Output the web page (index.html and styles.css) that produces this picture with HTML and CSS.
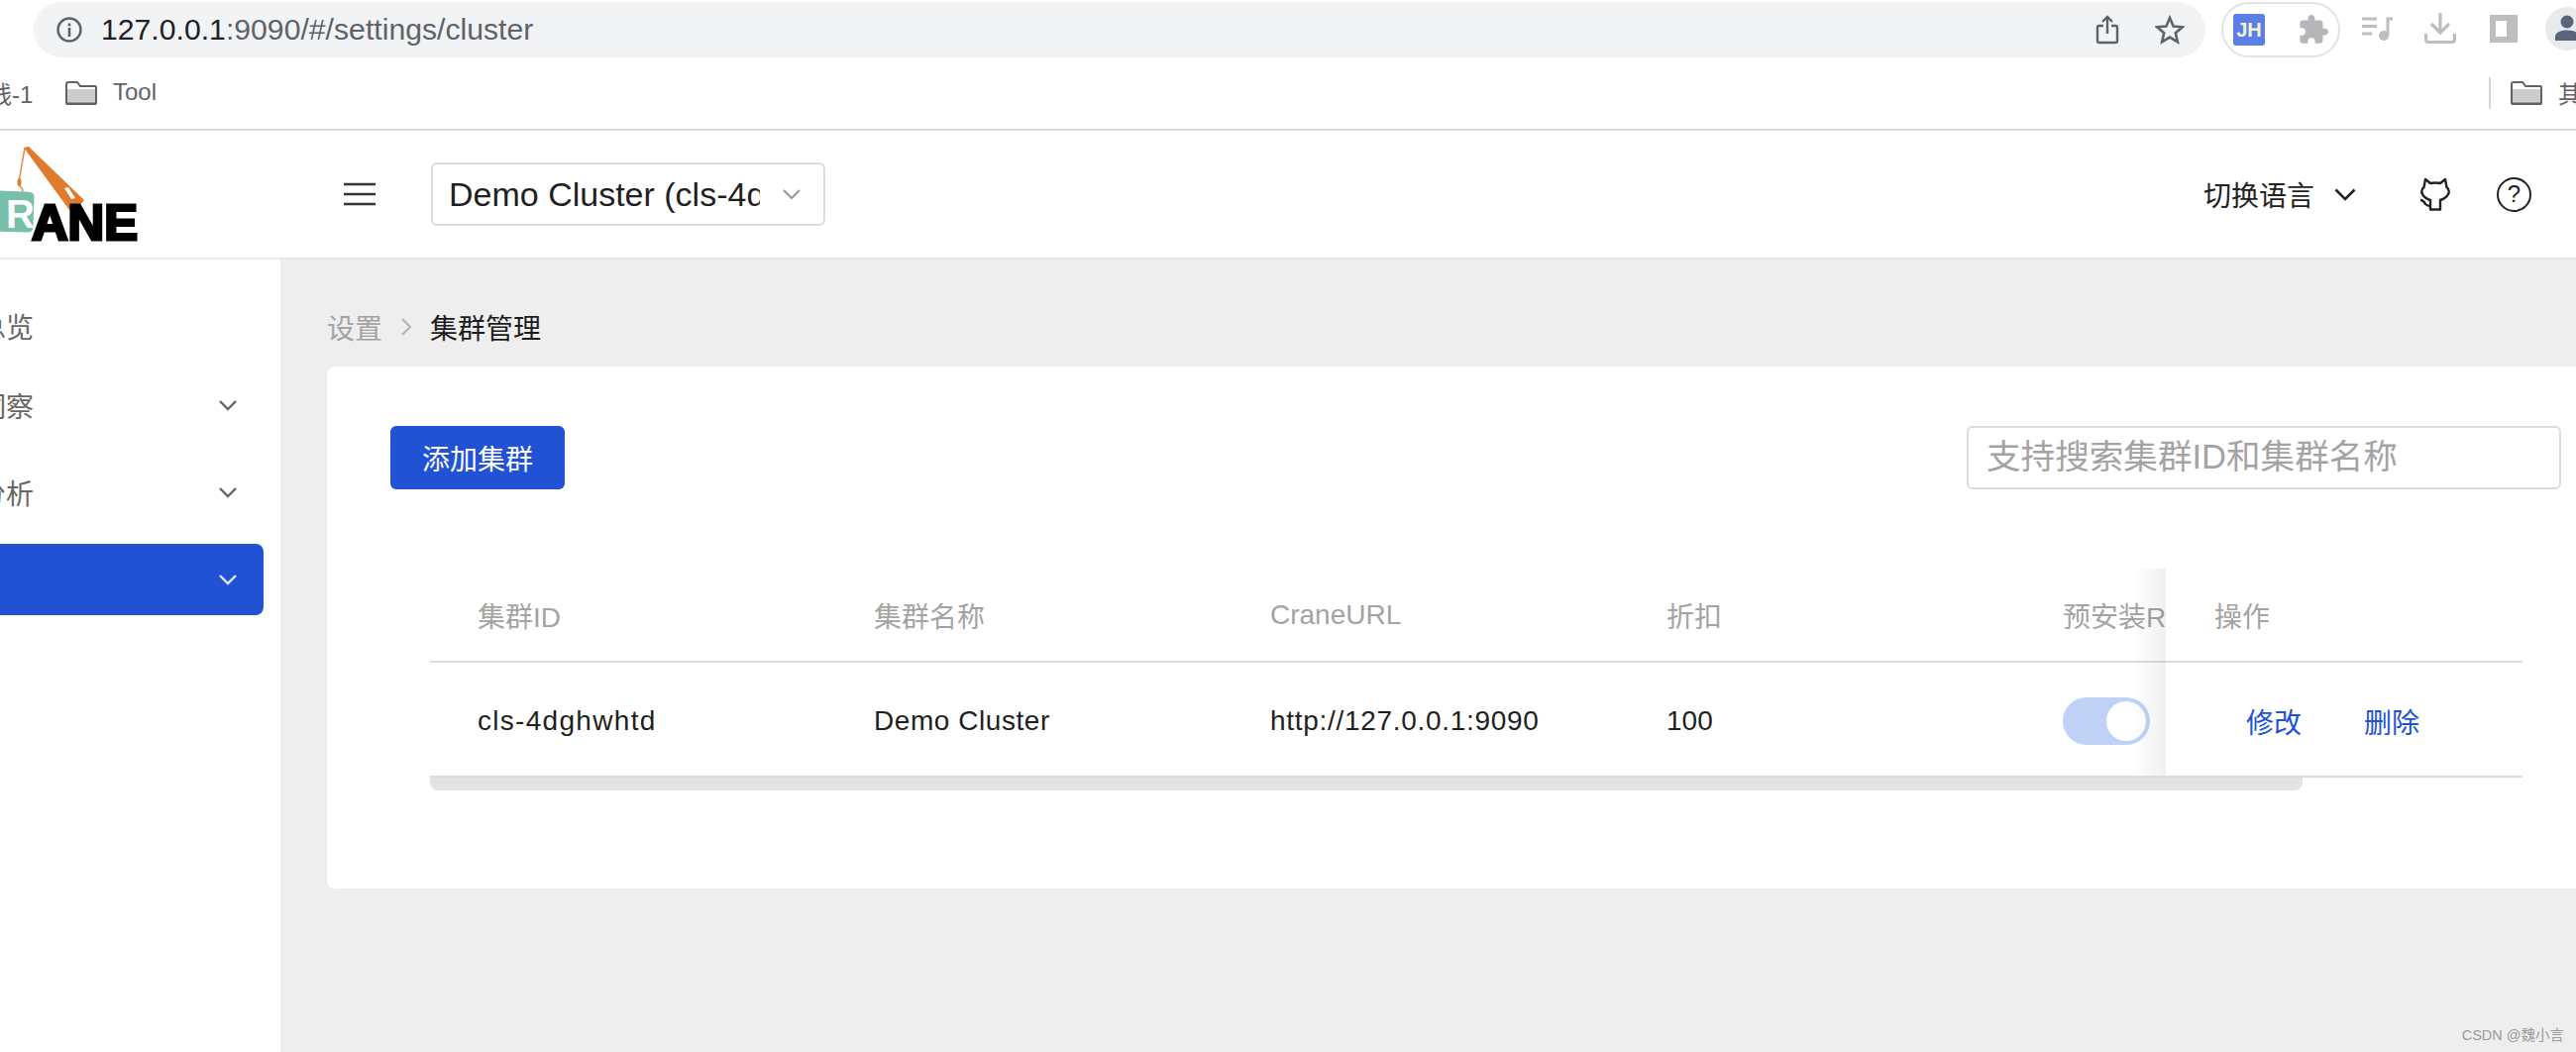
FILE: index.html
```html
<!DOCTYPE html>
<html lang="zh-CN">
<head>
<meta charset="UTF-8">
<title>集群管理</title>
<link rel="stylesheet" href="styles.css">
</head>
<body>
    <div class="toolbar">
        <div class="omnibox">
            <svg class="ico-info" viewBox="0 0 28 28"><circle cx="14" cy="14" r="11.5" fill="none" stroke="#5f6368" stroke-width="2.4"/><rect x="12.7" y="12" width="2.6" height="9" fill="#5f6368"/><rect x="12.7" y="7.5" width="2.6" height="2.8" fill="#5f6368"/></svg>
            <span class="url"><span class="url-host">127.0.0.1</span>:9090/#/settings/cluster</span>
            <svg class="ico-share" viewBox="0 0 24 30"><path d="M8 11H3.500a1.500 1.500 0 0 0-1.500 1.500V26.500A1.500 1.500 0 0 0 3.500 28h17a1.500 1.500 0 0 0 1.500-1.500V12.500A1.500 1.500 0 0 0 20.500 11H16M12 19V2M7 7l5-5 5 5" fill="none" stroke="#5f6368" stroke-width="2.4"/></svg>
            <svg class="ico-star" viewBox="0 0 30 30"><path d="M15 3l3.600 8.500 9.200.8-7 6 2.100 9L15 22.600 7.100 27.300l2.100-9-7-6 9.200-.8z" fill="none" stroke="#5f6368" stroke-width="2.600"/></svg>
        </div>
        <div class="ext-pill">
            <span class="ext-jh">JH</span>
            <svg class="ico-puzzle" viewBox="1 1 22 22"><path d="M20.500 11H19V7c0-1.100-.9-2-2-2h-4V3.500C13 2.120 11.880 1 10.500 1S8 2.120 8 3.500V5H4c-1.100 0-1.990.9-1.990 2v3.800H3.500c1.490 0 2.700 1.210 2.700 2.700s-1.210 2.700-2.700 2.700H2V20c0 1.100.9 2 2 2h3.800v-1.500c0-1.490 1.210-2.700 2.700-2.700 1.490 0 2.700 1.210 2.700 2.700V22H17c1.100 0 2-.9 2-2v-4h1.500c1.380 0 2.500-1.120 2.500-2.500S21.880 11 20.500 11z" fill="#b4b6b9"/></svg>
        </div>
        <svg class="ico-queue" viewBox="0 0 32 26"><path d="M1 3h15M1 10.500h15M1 18h10" stroke="#bdbec0" stroke-width="3" fill="none"/><path d="M27 20V3h5" stroke="#bdbec0" stroke-width="3" fill="none"/><circle cx="23" cy="20" r="5" fill="#bdbec0"/></svg>
        <svg class="ico-download" viewBox="0 0 32 32"><path d="M16 0v19M7 11l9 9 9-9M1.600 21v6a2.500 2.500 0 0 0 2.500 2.500h23.800a2.500 2.500 0 0 0 2.500-2.500v-6" fill="none" stroke="#bdbec0" stroke-width="3.200"/></svg>
        <div class="ico-panel"></div>
        <div class="avatar">
            <svg viewBox="0 0 44 44"><circle cx="22" cy="15" r="6.500" fill="#5a6478"/><path d="M10 34v-4c0-4 5-6.500 12-6.500S34 26 34 30v4z" fill="#5a6478"/></svg>
        </div>
    </div>

    <div class="bookmarks">
        <span class="bm-cut">钱-1</span>
        <svg class="ico-folder" viewBox="0 0 32 24"><path d="M1 22V3a2 2 0 0 1 2-2h9l3 4h15a1 1 0 0 1 1 1v16a1 1 0 0 1-1 1H2a1 1 0 0 1-1-1z" fill="#fff" stroke="#5f6368" stroke-width="2"/><rect x="2" y="8" width="28" height="14" fill="#ccc"/><path d="M1 22.500h30" stroke="#5f6368" stroke-width="2"/></svg>
        <span class="bm-text">Tool</span>
        <span class="bm-spacer"></span>
        <span class="bm-sep"></span>
        <svg class="ico-folder" viewBox="0 0 32 24"><path d="M1 22V3a2 2 0 0 1 2-2h9l3 4h15a1 1 0 0 1 1 1v16a1 1 0 0 1-1 1H2a1 1 0 0 1-1-1z" fill="#fff" stroke="#5f6368" stroke-width="2"/><rect x="2" y="8" width="28" height="14" fill="#ccc"/><path d="M1 22.500h30" stroke="#5f6368" stroke-width="2"/></svg>
        <span class="bm-text bm-other">其他书签</span>
    </div>

    <div class="header">
        <div class="logo">
            <svg viewBox="0 0 150 128" width="150" height="128">
                <path d="M24 17 L29 16 L85 70 L73 84 Q48 50 24 17z" fill="#e07b2d"/>
                <path d="M65 58 L69 57 L76 68 L72 69z" fill="#fff"/>
                <path d="M25 17 L20 46 L19 54 L23 60 L21 64" fill="none" stroke="#e58a45" stroke-width="1.500"/>
                <ellipse cx="19.500" cy="52" rx="2" ry="4" fill="#e07b2d"/>
                <rect x="-12" y="61" width="46" height="41" rx="5" fill="#76bfa9" transform="rotate(2 11 81)"/>
                <text x="6" y="98" class="logo-r">R</text>
                <text x="32" y="109.500" class="logo-ane" textLength="107" lengthAdjust="spacingAndGlyphs">ANE</text>
            </svg>
        </div>
        <svg class="ico-menu" viewBox="0 0 32 24"><path d="M0 2h32M0 12h32M0 22h32" stroke="#333" stroke-width="2.400"/></svg>
        <div class="cluster-select">
            <span class="cluster-name">Demo Cluster (cls-4dghwhtd)</span>
            <svg class="chev" viewBox="0 0 20 12"><path d="M2 2l8 8 8-8" fill="none" stroke="#999" stroke-width="2"/></svg>
        </div>
        <span class="lang">切换语言</span>
        <svg class="lang-chev" viewBox="0 0 22 13"><path d="M1.500 1.500l9.500 9.500 9.500-9.500" fill="none" stroke="#222" stroke-width="2.600"/></svg>
        <svg class="ico-github" viewBox="0 0 30 34"><path d="M5 2L10 6Q15 5 20 6L25 2L26.500 10Q29.500 12.500 28.500 16Q26.500 21 20 23V32.500H10V23Q3.500 21 1.500 16Q.5 12.500 3.500 10ZM0 23Q3 23 5 27Q7 29 10 29" fill="none" stroke="#222" stroke-width="2.400" stroke-linejoin="round"/></svg>
        <div class="ico-help">?</div>
    </div>

    <div class="main">
        <div class="sidebar">
            <div class="nav-item nav-first"><span class="nav-label">总览</span></div>
            <div class="nav-item"><span class="nav-label">洞察</span><svg class="nav-chev" viewBox="0 0 20 12"><path d="M2 2l8 8 8-8" fill="none" stroke="#666" stroke-width="2.400"/></svg></div>
            <div class="nav-item"><span class="nav-label">分析</span><svg class="nav-chev" viewBox="0 0 20 12"><path d="M2 2l8 8 8-8" fill="none" stroke="#666" stroke-width="2.400"/></svg></div>
            <div class="nav-item nav-active"><svg class="nav-chev" viewBox="0 0 20 12"><path d="M2 2l8 8 8-8" fill="none" stroke="#e4eaf9" stroke-width="2.400"/></svg></div>
        </div>
        <div class="content">
            <div class="breadcrumb">
                <span class="crumb-parent">设置</span>
                <svg class="crumb-sep" viewBox="0 0 12 20"><path d="M2 2l8 8-8 8" fill="none" stroke="#b5b5b5" stroke-width="2.200"/></svg>
                <span class="crumb-current">集群管理</span>
            </div>
            <div class="card">
                <div class="card-top">
                    <button class="btn-add">添加集群</button>
                    <div class="search">支持搜索集群ID和集群名称</div>
                </div>
                <div class="table-wrap">
                    <div class="row row-head">
                        <div class="cell">集群ID</div>
                        <div class="cell">集群名称</div>
                        <div class="cell">CraneURL</div>
                        <div class="cell">折扣</div>
                        <div class="cell cell-last">预安装R</div>
                    </div>
                    <div class="row row-body">
                        <div class="cell cell-id">cls-4dghwhtd</div>
                        <div class="cell cell-name">Demo Cluster</div>
                        <div class="cell cell-url">http://127.0.0.1:9090</div>
                        <div class="cell">100</div>
                        <div class="cell cell-last"><span class="switch"><span class="knob"></span></span></div>
                    </div>
                    <div class="scrollbar"></div>
                    <div class="fixed-col">
                        <div class="fixed-head">操作</div>
                        <div class="fixed-body"><a class="link">修改</a><a class="link">删除</a></div>
                    </div>
                </div>
            </div>
        </div>
    </div>
    <div class="watermark">CSDN @魏小言</div>
</body>
</html>
```

FILE: styles.css
```css
* {
    box-sizing: border-box;
}

html, body {
    margin: 0;
    padding: 0;
    height: 1062px;
    overflow: hidden;
}

body {
    position: relative;
    width: 2600px;
    background: #fff;
    font-family: "Liberation Sans", "Noto Sans CJK SC", sans-serif;
    color: #222;
}

/* browser bar */
.toolbar {
    height: 58px;
    display: flex;
    align-items: center;
    padding-left: 34px;
}

.toolbar > * {
    flex: none;
}

.omnibox {
    width: 2192px;
    height: 56px;
    margin-top: 2px;
    background: #f1f3f4;
    border-radius: 28px;
    display: flex;
    align-items: center;
    padding-left: 22px;
}

.ico-info {
    width: 28px;
    height: 28px;
}

.url {
    margin-left: 18px;
    font-size: 30.200px;
    color: #5f6368;
    flex: 1;
}

.url-host {
    color: #202124;
}

.ico-share {
    width: 24px;
    height: 30px;
}

.ico-star {
    width: 30px;
    height: 30px;
    margin-left: 36px;
    margin-right: 21px;
}

.ext-pill {
    width: 120px;
    height: 56px;
    margin-left: 16px;
    margin-top: 2px;
    border: 2px solid #e2e3e4;
    border-radius: 28px;
    display: flex;
    align-items: center;
    padding-left: 10px;
}

.ext-jh {
    width: 32px;
    height: 32px;
    background: #5b7fe6;
    border-radius: 3px;
    color: #f4f2d0;
    font-size: 20px;
    font-weight: bold;
    text-align: center;
    line-height: 32px;
}

.ico-puzzle {
    width: 30px;
    height: 30px;
    margin-left: 34px;
}

.ico-queue {
    width: 32px;
    height: 26px;
    margin-left: 21px;
}

.ico-download {
    width: 32px;
    height: 32px;
    margin-left: 32px;
}

.ico-panel {
    width: 28px;
    height: 28px;
    margin-left: 34px;
    border: 6px solid #bdbec0;
    border-right-width: 11px;
    background: #fff;
}

.avatar {
    width: 44px;
    height: 44px;
    margin-left: 28px;
    border-radius: 50%;
    background: #e8eaed;
}

.avatar svg {
    display: block;
}

/* bookmarks */
.bookmarks {
    height: 74px;
    border-bottom: 2px solid #dcdcdc;
    display: flex;
    align-items: center;
    font-size: 24px;
    color: #5f6368;
}

.bm-cut {
    width: 32px;
    flex: none;
    margin-left: -12px;
    padding-bottom: 2px;
    white-space: nowrap;
}

.ico-folder {
    width: 32px;
    height: 24px;
    flex: none;
    margin-left: 46px;
}

.bm-text {
    margin-left: 16px;
    padding-bottom: 2px;
    white-space: nowrap;
}

.bm-spacer {
    flex: 1;
}

.bm-sep {
    width: 2px;
    height: 32px;
    background: #d5d5d5;
}

.bm-sep + .ico-folder {
    margin-left: 20px;
}

.bm-other {
    width: 18px;
    overflow: hidden;
    flex: none;
}

/* app header */
.header {
    height: 130px;
    border-bottom: 2px solid #e8e8e8;
    display: flex;
    align-items: center;
}

.logo {
    width: 347px;
    flex: none;
    height: 128px;
}

.logo svg {
    display: block;
}

.logo-r {
    font-family: "Liberation Sans", sans-serif;
    font-size: 40px;
    font-weight: bold;
    fill: #fff;
}

.logo-ane {
    font-family: "Liberation Sans", sans-serif;
    font-size: 50px;
    font-weight: bold;
    fill: #000;
    stroke: #000;
    stroke-width: 3px;
}

.ico-menu {
    width: 32px;
    height: 24px;
    flex: none;
}

.cluster-select {
    width: 398px;
    height: 64px;
    margin-left: 56px;
    border: 2px solid #dcdcdc;
    border-radius: 6px;
    display: flex;
    align-items: center;
    padding-left: 16px;
}

.cluster-name {
    width: 314px;
    overflow: hidden;
    white-space: nowrap;
    font-size: 34px;
    color: #1f1f1f;
    flex: none;
}

.chev {
    width: 20px;
    height: 12px;
    margin-left: 22px;
}

.lang {
    margin-left: auto;
    font-size: 28px;
    color: #222;
}

.lang-chev {
    width: 22px;
    height: 13px;
    margin-left: 20px;
}

.ico-github {
    width: 30px;
    height: 34px;
    margin-left: 65px;
}

.ico-help {
    width: 35px;
    height: 35px;
    margin-left: 47px;
    margin-right: 45px;
    border: 2.4px solid #222;
    border-radius: 50%;
    font-size: 24px;
    text-align: center;
    line-height: 30px;
}

/* main */
.main {
    display: flex;
    height: 800px;
}

.sidebar {
    width: 283px;
    flex: none;
    padding-right: 17px;
    padding-top: 36px;
    background: #fff;
}

.nav-item {
    height: 88px;
    display: flex;
    align-items: center;
    font-size: 28px;
    color: #666;
    position: relative;
}

.nav-first {
    height: 62px;
    margin-bottom: 5px;
}

.nav-label {
    margin-left: -22px;
    white-space: nowrap;
}

.nav-chev {
    width: 20px;
    height: 12px;
    position: absolute;
    left: 220px;
    top: 38px;
}

.nav-active {
    height: 72px;
    margin-top: 8px;
    background: #2152d4;
    border-radius: 0 8px 8px 0;
}

.nav-active .nav-chev {
    top: 30px;
}

.content {
    flex: 1;
    background: #eeeeee;
    padding-left: 47px;
}

.breadcrumb {
    height: 108px;
    display: flex;
    align-items: center;
    font-size: 28px;
    padding-top: 32px;
    padding-bottom: 4px;
}

.crumb-parent {
    color: #a3a3a3;
}

.crumb-sep {
    width: 12px;
    height: 20px;
    margin-left: 18px;
    margin-right: 18px;
}

.crumb-current {
    color: #1c1c1c;
}

.card {
    height: 527px;
    background: #fff;
    border-radius: 8px 0 0 8px;
    padding: 60px 15px 0 64px;
}

.card-top {
    display: flex;
    justify-content: space-between;
    align-items: flex-start;
}

.btn-add {
    width: 176px;
    height: 64px;
    border: none;
    border-radius: 6px;
    background: #2152d4;
    color: #fff;
    font-family: inherit;
    font-size: 28px;
}

.search {
    width: 600px;
    height: 64px;
    border: 2px solid #dcdcdc;
    border-radius: 6px;
    padding-left: 18px;
    font-size: 34.600px;
    line-height: 58px;
    color: #a3a3a3;
}

.table-wrap {
    position: relative;
    width: 2112px;
    margin-top: 80px;
    margin-left: 40px;
    height: 224px;
    font-size: 28px;
}

.row {
    display: flex;
    width: 1752px;
    overflow: hidden;
    border-bottom: 2px solid #dcdcdc;
}

.row-head {
    height: 95px;
    color: #a3a3a3;
    align-items: center;
}

.row-body {
    height: 116px;
    color: #1f1f1f;
    padding-top: 4px;
    align-items: center;
}

.cell {
    width: 400px;
    padding-left: 48px;
    flex: none;
    white-space: nowrap;
}

.cell-id {
    letter-spacing: 1.300px;
}

.cell-name {
    letter-spacing: 0.550px;
}

.cell-url {
    letter-spacing: 0.700px;
}

.cell-last {
    width: 286px;
}

.switch {
    width: 88px;
    height: 48px;
    border-radius: 24px;
    background: #bfd2f6;
    padding: 4px;
    display: flex;
    justify-content: flex-end;
}

.knob {
    width: 40px;
    height: 40px;
    border-radius: 50%;
    background: #fff;
}

.scrollbar {
    width: 1890px;
    height: 13px;
    background: #e3e3e3;
    border-radius: 0 0 8px 8px;
}

.fixed-col {
    position: absolute;
    left: 1752px;
    top: 0;
    width: 360px;
    height: 211px;
    background: #fff;
}

.fixed-col::before {
    content: "";
    position: absolute;
    left: -48px;
    top: 0;
    width: 48px;
    height: 209px;
    background: linear-gradient(to right, rgba(0, 0, 0, 0) 30%, rgba(0, 0, 0, 0.06));
}

.fixed-head {
    height: 95px;
    padding-left: 49px;
    display: flex;
    align-items: center;
    color: #a3a3a3;
    border-bottom: 2px solid #dcdcdc;
}

.fixed-body {
    height: 116px;
    padding-top: 4px;
    padding-left: 81px;
    display: flex;
    align-items: center;
    gap: 63px;
    border-bottom: 2px solid #dcdcdc;
}

.link {
    color: #2152d4;
}

.watermark {
    position: absolute;
    right: 12px;
    bottom: 8px;
    font-size: 14.500px;
    color: #9a9a9a;
}
```
